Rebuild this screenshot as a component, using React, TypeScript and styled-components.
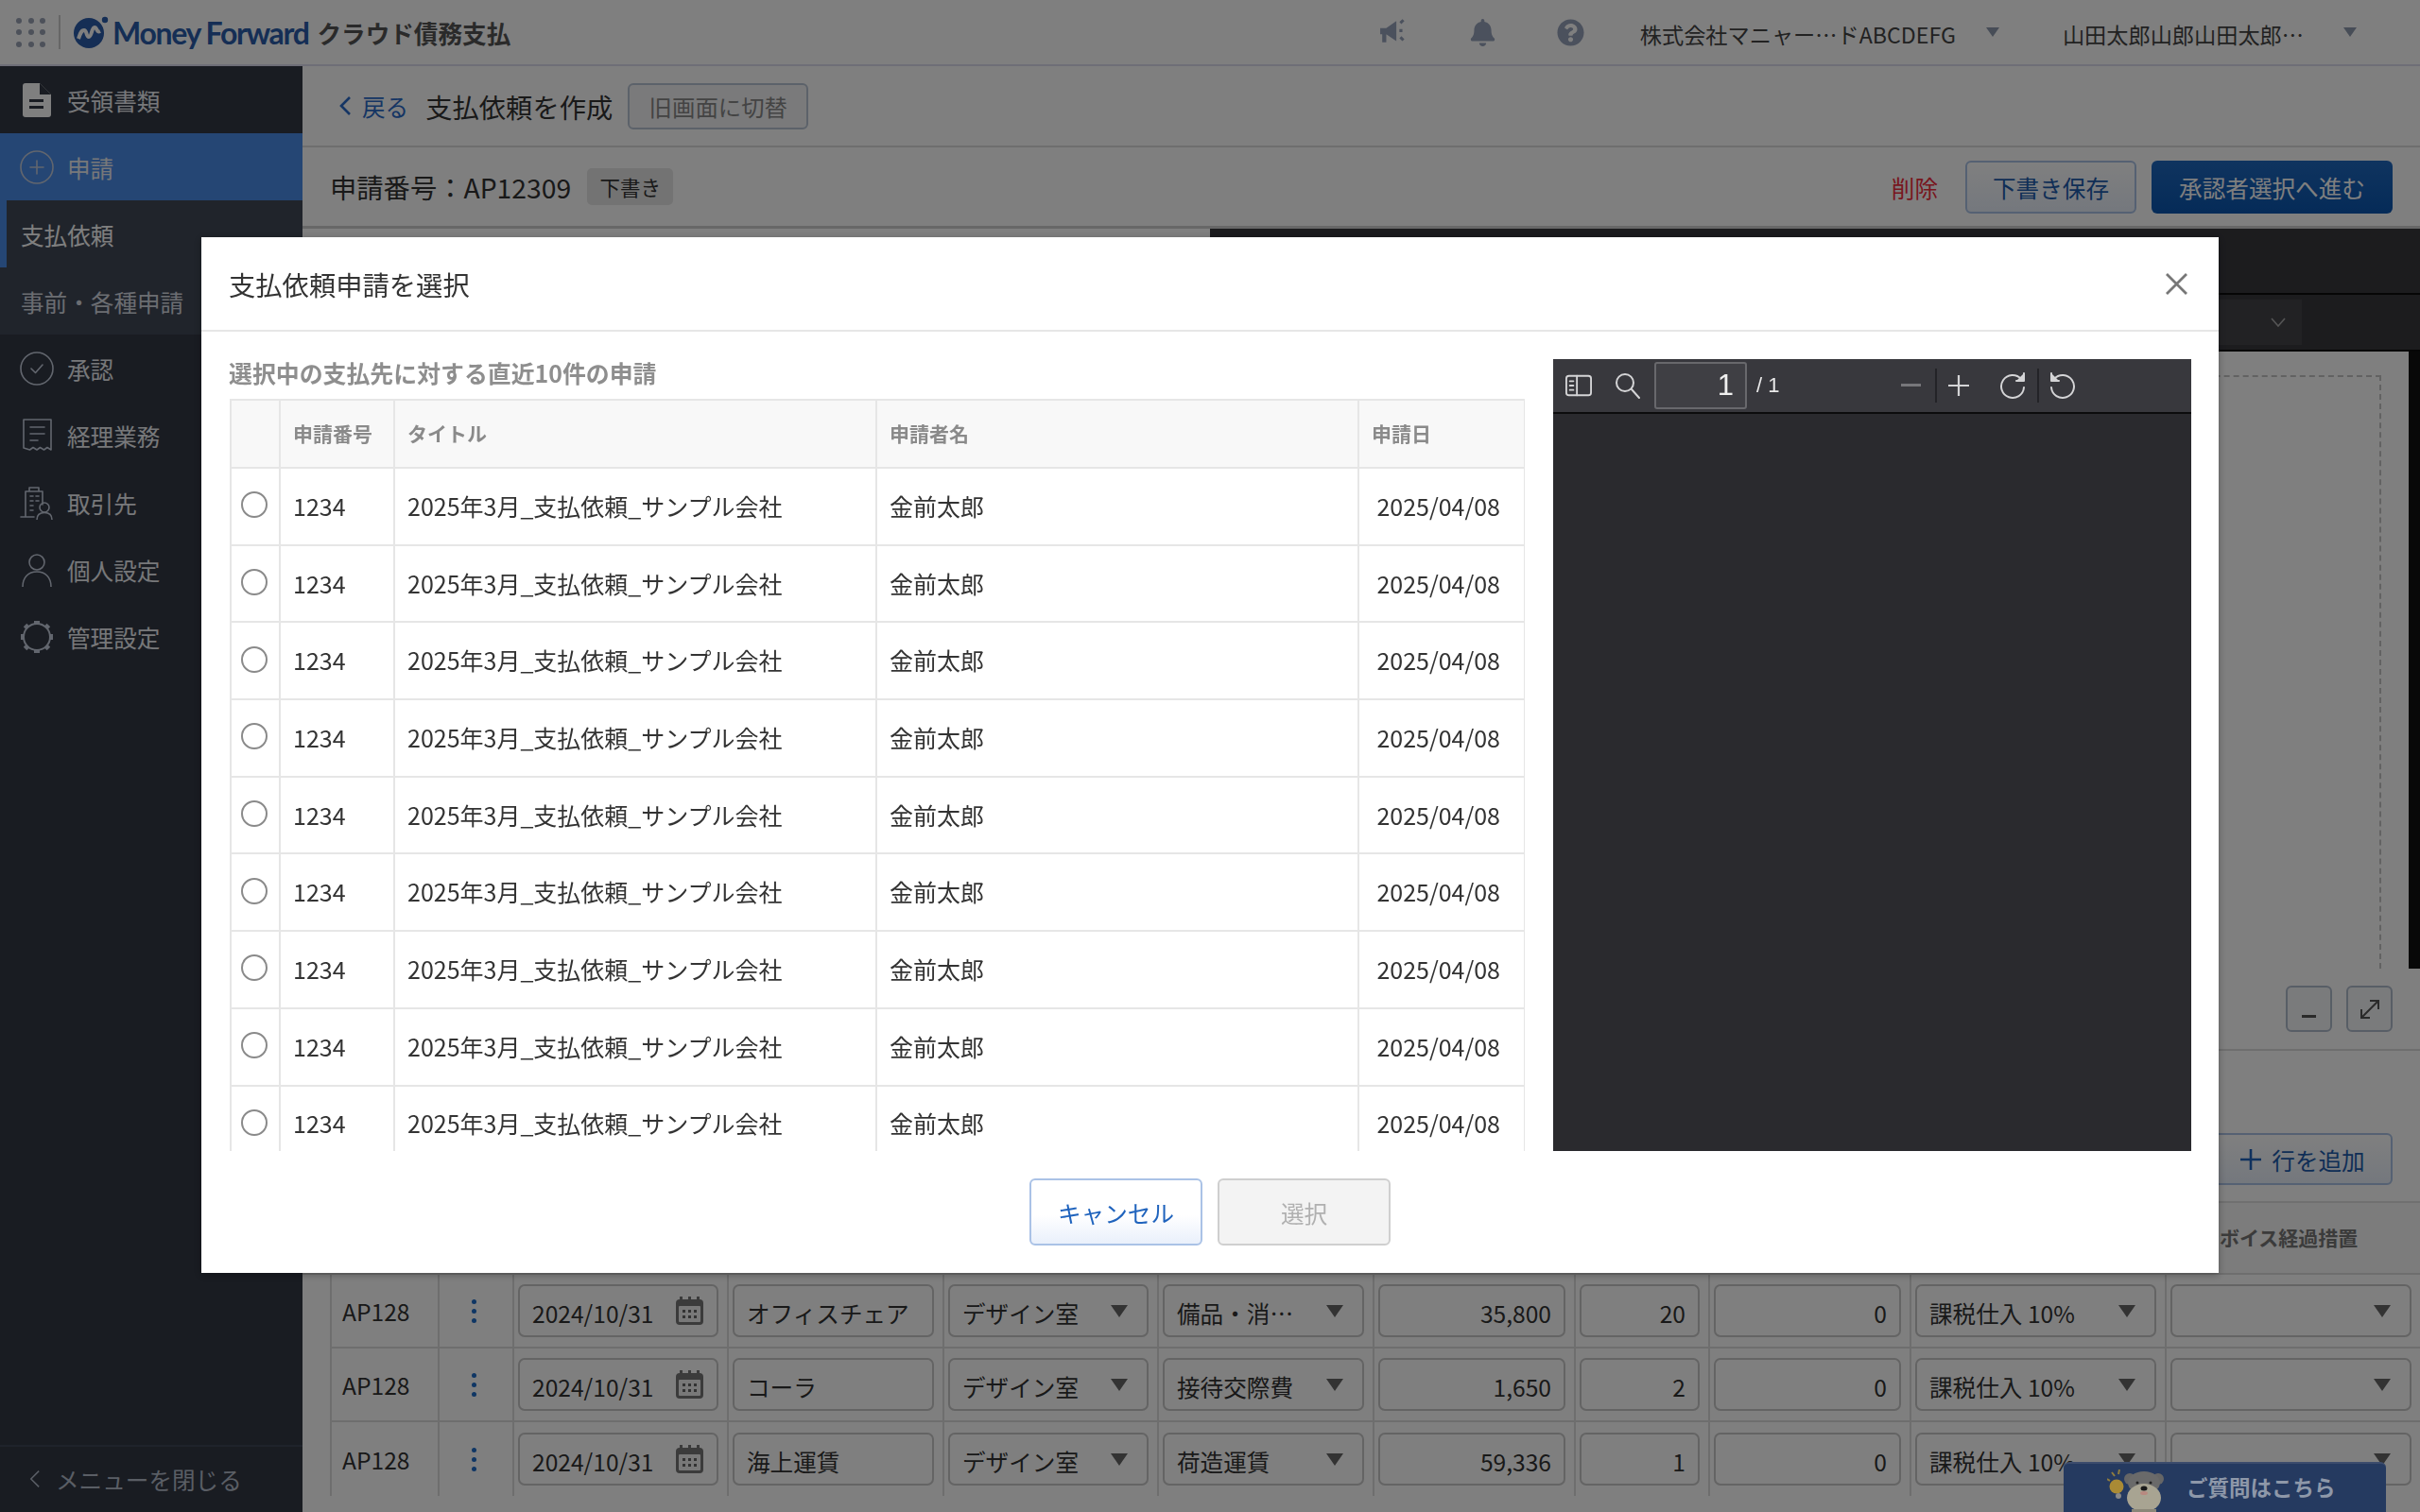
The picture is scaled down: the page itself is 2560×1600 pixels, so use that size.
import { FC, ReactNode } from 'react';
import styled, { createGlobalStyle } from 'styled-components';
import { FaBell, FaQuestionCircle } from 'react-icons/fa';

const GlobalStyle = createGlobalStyle`
  html, body {
    margin: 0;
    padding: 0;
    height: 100%;
    overflow: hidden;
  }
  body {
    font-family: "Noto Sans CJK JP", "Noto Sans", sans-serif;
    font-size: 24.6px;
    color: #333;
    background: #fff;
  }
  * {
    box-sizing: border-box;
  }
`;

const Page = styled.div`
  width: 2560px;
  height: 1600px;
  display: flex;
  flex-direction: column;
  overflow: hidden;
`;

/* top header */
const TopBar = styled.header`
  height: 70px;
  flex: none;
  display: flex;
  align-items: center;
  background: #fff;
  border-bottom: 2px solid #dde;
  padding: 0 67px 0 17px;
`;

const AppGrid = styled.div`
  display: grid;
  grid-template-columns: repeat(3, 6px);
  gap: 6.5px;
  padding-right: 14px;
  border-right: 2px solid #ccc;
  height: 36px;
  align-content: center;
  margin-right: 14px;
`;

const AppDot = styled.span`
  width: 6px;
  height: 6px;
  border-radius: 50%;
  background: #9aa3b5;
`;

const Brand = styled.div`
  display: flex;
  align-items: center;
`;

const BrandName = styled.span`
  font-family: "Lato", sans-serif;
  font-weight: 700;
  font-size: 32px;
  letter-spacing: -1.35px;
  color: #2a5caa;
  margin-left: 3px;
  white-space: nowrap;
`;

const ProductName = styled.span`
  font-size: 25.6px;
  font-weight: 700;
  color: #555;
  margin-left: 9px;
  white-space: nowrap;
`;

const TopRight = styled.div`
  margin-left: auto;
  display: flex;
  align-items: center;
`;

const TopIcon = styled.div`
  width: 93px;
  display: flex;
  justify-content: center;
  align-items: center;
  color: #96a2ba;
  font-size: 29px;
`;

const TopMenu = styled.div<{ $gap: number }>`
  display: flex;
  align-items: center;
  gap: ${p => p.$gap}px;
  margin-left: 27px;
  font-size: 23.2px;
  color: #444;
  white-space: nowrap;
  & + & {
    margin-left: 67px;
  }
`;

const TopMenuText = styled.span`
  padding-top: 4px;
`;

const TopCaret = styled.span`
  width: 0;
  height: 0;
  border-left: 7px solid transparent;
  border-right: 7px solid transparent;
  border-top: 10px solid #8f9aae;
`;

/* sidebar */
const Body = styled.div`
  flex: 1;
  display: flex;
  min-height: 0;
`;

const Sidebar = styled.nav`
  width: 320px;
  flex: none;
  background: #323844;
  display: flex;
  flex-direction: column;
`;

const NavItem = styled.div<{ $active?: boolean }>`
  height: 71px;
  flex: none;
  display: flex;
  align-items: center;
  gap: 14px;
  padding-left: 21px;
  color: #eef0f4;
  background: ${p => (p.$active ? '#4a8ce8' : 'transparent')};
`;

const NavIcon = styled.span`
  width: 36px;
  height: 40px;
  display: flex;
  align-items: center;
  justify-content: center;
  svg {
    display: block;
  }
`;

const SubItem = styled.div<{ $current?: boolean }>`
  height: 71px;
  flex: none;
  display: flex;
  align-items: center;
  padding-left: ${p => (p.$current ? 15 : 22)}px;
  background: #404856;
  color: ${p => (p.$current ? '#fff' : '#d7dbe3')};
  border-left: ${p => (p.$current ? '7px solid #4a8ce8' : 'none')};
`;

const CloseMenu = styled.div`
  margin-top: auto;
  height: 71px;
  display: flex;
  align-items: center;
  gap: 16px;
  padding: 0 0 2px 30px;
  border-top: 2px solid #3e4757;
  color: #b4bccb;
`;

/* main page behind the dialog */
const Main = styled.main`
  flex: 1;
  min-width: 0;
  display: flex;
  flex-direction: column;
  background: #fff;
`;

const TitleBar = styled.div`
  height: 86px;
  flex: none;
  display: flex;
  align-items: center;
  padding-left: 38px;
  border-bottom: 2px solid #ddd;
`;

const BackLink = styled.span`
  display: flex;
  align-items: center;
  gap: 11px;
  color: #2a6ac8;
  margin-right: 18px;
`;

const PageTitle = styled.span`
  font-size: 28.3px;
  color: #333;
`;

const OldViewButton = styled.span`
  margin-left: 16px;
  width: 191px;
  height: 49px;
  display: flex;
  align-items: center;
  justify-content: center;
  font-size: 24.4px;
  color: #888;
  border: 2px solid #b9c4d4;
  border-radius: 6px;
  background: #f4f5f7;
`;

const ActionBar = styled.div`
  height: 86px;
  flex: none;
  display: flex;
  align-items: center;
  padding: 0 29px 0 29px;
  border-bottom: 3px solid #cfcfcf;
`;

const ApplicationNo = styled.span`
  font-size: 28.3px;
  color: #333;
`;

const DraftTag = styled.span`
  margin-left: 17px;
  width: 91px;
  height: 39px;
  border-radius: 5px;
  background: #e6e6e6;
  display: flex;
  align-items: center;
  justify-content: center;
  font-size: 21.5px;
`;

const DeleteLink = styled.span`
  margin-left: auto;
  margin-right: 29px;
  color: #f02c3c;
`;

const SaveButton = styled.span`
  width: 181px;
  height: 56px;
  display: flex;
  align-items: center;
  justify-content: center;
  color: #1f5cad;
  border: 2px solid #aac2e6;
  border-radius: 6px;
  background: linear-gradient(#fff, #e9f0fb);
`;

const ProceedButton = styled.span`
  margin-left: 16px;
  width: 255px;
  height: 56px;
  display: flex;
  align-items: center;
  justify-content: center;
  color: #fff;
  border-radius: 6px;
  background: linear-gradient(#1f68bf, #0a56b0);
`;

const Split = styled.div`
  height: 870px;
  flex: none;
  display: flex;
  justify-content: flex-end;
  border-bottom: 2px solid #ddd;
`;

const Viewer = styled.div`
  width: 1280px;
  display: flex;
  flex-direction: column;
`;

const ViewerTop = styled.div`
  height: 70px;
  flex: none;
  background: #38383d;
  border-bottom: 2px solid #0c0c0d;
`;

const ViewerFind = styled.div`
  height: 60px;
  flex: none;
  background: #38383d;
  border-bottom: 2px solid #0c0c0d;
  display: flex;
  justify-content: flex-end;
  padding: 5px 125px 5px 0;
`;

const ViewerSelect = styled.div`
  width: 200px;
  background: #444449;
  display: flex;
  align-items: center;
  justify-content: flex-end;
  padding-right: 17px;
`;

const ViewerBody = styled.div`
  flex: 1;
  display: flex;
  min-height: 0;
  overflow: hidden;
  background: #fff;
`;

const DropZone = styled.div`
  flex: 1;
  margin: 25px 29px -10px 30px;
  border: 2px dashed #c4c4c4;
`;

const ScrollTrack = styled.div`
  width: 12px;
  background: #111;
`;

const ViewerControls = styled.div`
  height: 85px;
  flex: none;
  display: flex;
  justify-content: flex-end;
  align-items: center;
  gap: 15px;
  padding-right: 29px;
`;

const ToolSquare = styled.span`
  width: 49px;
  height: 49px;
  display: flex;
  align-items: center;
  justify-content: center;
  border: 2px solid #b0bccd;
  border-radius: 6px;
  background: #f5f6f8;
  color: #555;
`;

const MinusMark = styled.span`
  width: 15px;
  height: 3px;
  background: #555;
  margin-top: 16px;
`;

const AddRowArea = styled.div`
  height: 159px;
  flex: none;
  display: flex;
  justify-content: flex-end;
  padding: 87px 29px 0 0;
`;

const AddRowButton = styled.span`
  width: 190px;
  height: 55px;
  display: flex;
  align-items: center;
  justify-content: center;
  gap: 11px;
  color: #1f5cad;
  border: 2px solid #aac2e6;
  border-radius: 6px;
  background: linear-gradient(#fff, #e9f0fb);
`;

const LineTable = styled.div`
  margin-left: 29px;
  display: flex;
  flex-direction: column;
`;

const lineColumns = '114px 79px 227px 228px 227px 228px 213px 142px 213px 270px 270px';

const LineRow = styled.div<{ $last?: boolean }>`
  height: 78px;
  display: grid;
  grid-template-columns: ${lineColumns};
  border-bottom: ${p => (p.$last ? 'none' : '2px solid #dcdcdc')};
`;

const LineHead = styled.div`
  height: 78px;
  margin-left: -29px;
  padding-left: 29px;
  display: grid;
  grid-template-columns: ${lineColumns};
  background: #f8f8f8;
  border-top: 2px solid #e0e0e0;
  border-bottom: 2px solid #dcdcdc;
`;

const HeadCell = styled.div`
  display: flex;
  align-items: center;
  padding: 0 0 2px 16px;
  font-size: 21px;
  font-weight: 700;
  color: #777;
  white-space: nowrap;
`;

const LineCell = styled.div`
  display: flex;
  align-items: center;
  border-left: 2px solid #dcdcdc;
  padding: 0 9px 0 4px;
`;

const LineId = styled(LineCell)`
  padding-left: 11px;
`;

const Kebab = styled.span`
  margin: 0 auto;
  display: flex;
  flex-direction: column;
  gap: 5px;
  i {
    width: 5px;
    height: 5px;
    border-radius: 50%;
    background: #1f6cc8;
  }
`;

const Field = styled.div<{ $align?: 'between' | 'end' }>`
  flex: 1;
  min-width: 0;
  height: 56px;
  display: flex;
  align-items: center;
  justify-content: ${p => (p.$align === 'end' ? 'flex-end' : 'space-between')};
  padding: 0 20px 0 13px;
  border: 2px solid #c8c8c8;
  border-radius: 7px;
  background: #fff;
  white-space: nowrap;
`;

const NumberField = styled(Field)`
  padding-right: 13px;
`;

const DateField = styled(Field)`
  padding-right: 14px;
`;

const FieldText = styled.span`
  padding-top: 3px;
`;

const Caret = styled.span`
  width: 0;
  height: 0;
  flex: none;
  border-left: 9px solid transparent;
  border-right: 9px solid transparent;
  border-top: 13px solid #666;
`;

/* dialog */
const Overlay = styled.div`
  position: fixed;
  inset: 0;
  padding-bottom: 2px;
  background: rgba(0, 0, 0, 0.5);
  display: flex;
  align-items: center;
  justify-content: center;
`;

const Dialog = styled.section`
  width: 2134px;
  height: 1096px;
  background: #fff;
  display: flex;
  flex-direction: column;
  box-shadow: 0 2px 8px rgba(0, 0, 0, 0.3);
`;

const DialogHead = styled.div`
  height: 100px;
  flex: none;
  display: flex;
  align-items: center;
  justify-content: space-between;
  padding: 0 33px 0 29px;
  border-bottom: 2px solid #e6e6e6;
`;

const DialogTitle = styled.h2`
  margin: 0;
  font-size: 28.3px;
  font-weight: 400;
  color: #333;
`;

const DialogBody = styled.div`
  flex: 1;
  min-height: 0;
  display: flex;
  gap: 30px;
  padding: 29px 29px 0;
`;

const ListPane = styled.div`
  width: 1371px;
  display: flex;
  flex-direction: column;
`;

const ListLabel = styled.div`
  height: 42px;
  flex: none;
  line-height: 28px;
  font-size: 24.9px;
  font-weight: 700;
  color: #8e8e8e;
`;

const ListScroll = styled.div`
  flex: 1;
  min-height: 0;
  overflow: hidden;
`;

const ListTable = styled.table`
  width: 1369px;
  margin: 0 1px;
  border-collapse: collapse;
  table-layout: fixed;
`;

const Th = styled.th`
  height: 72px;
  padding: 0 13px 3px;
  text-align: left;
  font-size: 21px;
  font-weight: 700;
  color: #8a8a8a;
  background: #f8f8f8;
  border: 2px solid #e6e6e6;
  white-space: nowrap;
`;

const Td = styled.td<{ $right?: boolean }>`
  height: 81.7px;
  padding: 0 ${p => (p.$right ? 25 : 13)}px 2px 13px;
  text-align: ${p => (p.$right ? 'right' : 'left')};
  font-size: 25px;
  color: #333;
  border: 2px solid #e6e6e6;
  white-space: nowrap;
`;

const RadioMark = styled.span`
  display: block;
  width: 28px;
  height: 28px;
  margin: -1px 0 0 -3px;
  border-radius: 50%;
  border: 2.5px solid #8a8a8a;
  background: #fff;
`;

const PdfPane = styled.div`
  width: 675px;
  display: flex;
  flex-direction: column;
  background: #2a2a2e;
`;

const PdfBar = styled.div`
  height: 58px;
  flex: none;
  display: flex;
  align-items: center;
  background: #38383d;
  border-bottom: 2px solid #0c0c0d;
  color: #c8c8ca;
  padding-left: 13px;
`;

const PdfTool = styled.span<{ $w: number; $dim?: boolean; $ml?: number }>`
  width: ${p => p.$w}px;
  margin-left: ${p => p.$ml ?? 0}px;
  display: flex;
  align-items: center;
  justify-content: center;
  flex: none;
  color: ${p => (p.$dim ? '#77777b' : '#d4d4d6')};
`;

const PageInput = styled.span`
  width: 98px;
  height: 50px;
  flex: none;
  margin-left: 1px;
  display: flex;
  align-items: center;
  justify-content: flex-end;
  padding-right: 12px;
  background: #3f3f44;
  border: 2px solid #68686c;
  border-radius: 3px;
  font-family: "Liberation Sans", sans-serif;
  font-size: 31px;
  color: #f0f0f0;
`;

const PageTotal = styled.span`
  margin-left: 10px;
  width: 153px;
  flex: none;
  font-family: "Liberation Sans", sans-serif;
  font-size: 22px;
  color: #e8e8e8;
`;

const PdfSep = styled.span<{ $ml: number }>`
  width: 2px;
  height: 36px;
  flex: none;
  margin-left: ${p => p.$ml}px;
  background: #232327;
`;

const DialogFoot = styled.div`
  height: 129px;
  flex: none;
  display: flex;
  justify-content: center;
  gap: 16px;
  padding-top: 29px;
`;

const FootButton = styled.button<{ $muted?: boolean }>`
  width: 183px;
  height: 71px;
  padding: 0;
  font: inherit;
  border-radius: 6px;
  color: ${p => (p.$muted ? '#b0b0b0' : '#1f63bd')};
  border: 2px solid ${p => (p.$muted ? '#cfcfcf' : '#aac2e6')};
  background: ${p => (p.$muted ? '#f3f3f3' : 'linear-gradient(#fff 55%, #e9f0fb)')};
`;

/* help tab */
const HelpTab = styled.div`
  position: fixed;
  left: 2183px;
  bottom: 0;
  width: 341px;
  height: 53px;
  display: flex;
  align-items: flex-start;
  padding: 6px 0 0 46px;
  gap: 14px;
  background: #253a60;
  border-top: 2px solid #3c4c6c;
  border-radius: 6px 6px 0 0;
  overflow: hidden;
  color: #8e98a9;
  font-size: 22.5px;
  font-weight: 700;
  line-height: 36px;
`;

const NavGlyph: FC<{ children: ReactNode; size?: number }> = ({ children, size = 36 }) => (
  <NavIcon>
    <svg width={size} height={size} viewBox="0 0 36 36" fill="none" stroke="#c4ccdc" strokeWidth="1.6" strokeLinecap="round" strokeLinejoin="round">
      {children}
    </svg>
  </NavIcon>
);

const PdfIcon: FC<{ children: ReactNode; w?: number }> = ({ children, w = 30 }) => (
  <svg width={w} height="30" viewBox="0 0 30 30" fill="none" stroke="currentColor" strokeWidth="2" strokeLinecap="round" strokeLinejoin="round">
    {children}
  </svg>
);

const CalendarIcon = () => (
  <svg width="29" height="30" viewBox="0 0 29 30">
    <rect x="0" y="3" width="29" height="27" rx="4" fill="#777" />
    <rect x="4" y="0" width="3" height="6" fill="#777" />
    <rect x="13" y="0" width="3" height="6" fill="#777" />
    <rect x="22" y="0" width="3" height="6" fill="#777" />
    <rect x="3" y="10" width="23" height="17" rx="1" fill="#f0f0f0" />
    {[7, 13, 19].map(x => [14, 20].map(y => <rect key={`${x}-${y}`} x={x} y={y} width="3" height="3" fill="#666" />))}
  </svg>
);

const Chevron: FC<{ color: string; w?: number; h?: number; width?: number }> = ({ color, w = 14, h = 22, width = 2.6 }) => (
  <svg width={w} height={h} viewBox="0 0 14 22" fill="none" stroke={color} strokeWidth={width}>
    <path d="M12 2 3 11l9 9" />
  </svg>
);

const Dog = () => (
  <svg width="70" height="53" viewBox="0 0 70 53">
    <path d="M8 7l-3-4M12 5l1-5M3 12l-3-2" stroke="#8f7c3e" strokeWidth="2" />
    <circle cx="10" cy="18" r="7.5" fill="#a98a35" />
    <circle cx="12" cy="28" r="3" fill="#888" />
    <ellipse cx="24" cy="10" rx="6" ry="6" fill="#666" />
    <ellipse cx="54" cy="10" rx="6" ry="6" fill="#666" />
    <ellipse cx="39" cy="14" rx="17" ry="12" fill="#6a6a6a" />
    <ellipse cx="39" cy="30" rx="18" ry="15" fill="#a8a492" />
    <rect x="26" y="42" width="26" height="11" fill="#8a8678" />
    <circle cx="32" cy="14" r="1.5" fill="#222" />
    <circle cx="46" cy="14" r="1.5" fill="#222" />
    <ellipse cx="39" cy="20" rx="3.5" ry="2.5" fill="#1a1a1a" />
    <ellipse cx="39" cy="25" rx="4" ry="2" fill="#b88a80" />
  </svg>
);

const requests = Array.from({ length: 9 }, (_, i) => i);

const lines = [
  { item: 'オフィスチェア', cat: '備品・消…', amount: '35,800', qty: '20' },
  { item: 'コーラ', cat: '接待交際費', amount: '1,650', qty: '2' },
  { item: '海上運賃', cat: '荷造運賃', amount: '59,336', qty: '1' },
];

const heads = ['申請番号', '', '日付', '内容', '部門', '勘定科目', '単価', '数量', '税額', '税区分', 'インボイス経過措置'];

export default function App() {
  return (
    <>
      <GlobalStyle />
      <Page>
        <TopBar>
          <AppGrid>
            {Array.from({ length: 9 }, (_, i) => <AppDot key={i} />)}
          </AppGrid>
          <Brand>
            <svg width="38" height="34" viewBox="0 0 38 34">
              <circle cx="16" cy="18" r="16" fill="#2a5caa" />
              <circle cx="33" cy="4" r="3.200" fill="#2a5caa" />
              <path d="M5 24c2-6 3-9 6-9 3 0 2 7 5 7 3 0 3-10 6-10 3 0 2 6 6 4" fill="none" stroke="#fff" strokeWidth="4" strokeLinejoin="round" />
            </svg>
            <BrandName>Money Forward</BrandName>
            <ProductName>クラウド債務支払</ProductName>
          </Brand>
          <TopRight>
            <TopIcon>
              <svg width="32" height="30" viewBox="0 0 30 28" fill="#96a2ba">
                <path d="M1 10h6l10-7v20L7 16v8H3v-8H1z" />
                <path d="M20 11h3v3h-3zM20 4l3-3 2 2-3 3zM20 20l2-2 3 3-2 2z" />
              </svg>
            </TopIcon>
            <TopIcon><FaBell /></TopIcon>
            <TopIcon><FaQuestionCircle /></TopIcon>
            <TopMenu $gap={32}><TopMenuText>株式会社マニャー…ドABCDEFG</TopMenuText><TopCaret /></TopMenu>
            <TopMenu $gap={42}><TopMenuText>山田太郎山郎山田太郎…</TopMenuText><TopCaret /></TopMenu>
          </TopRight>
        </TopBar>
        <Body>
          <Sidebar>
            <NavItem>
              <NavIcon>
                <svg width="30" height="36" viewBox="0 0 30 36">
                  <path d="M3 0h15l12 12v21a3 3 0 0 1-3 3H3a3 3 0 0 1-3-3V3a3 3 0 0 1 3-3z" fill="#fff" />
                  <path d="M18 0v12h12z" fill="#323844" />
                  <rect x="7" y="17" width="15" height="3" fill="#323844" />
                  <rect x="7" y="24" width="15" height="3" fill="#323844" />
                </svg>
              </NavIcon>
              受領書類
            </NavItem>
            <NavItem $active>
              <NavGlyph>
                <circle cx="18" cy="18" r="17" />
                <path d="M18 11v14M11 18h14" />
              </NavGlyph>
              申請
            </NavItem>
            <SubItem $current>支払依頼</SubItem>
            <SubItem>事前・各種申請</SubItem>
            <NavItem>
              <NavGlyph>
                <circle cx="18" cy="18" r="17" />
                <path d="M12 18l4.500 4.500L24 14" />
              </NavGlyph>
              承認
            </NavItem>
            <NavItem>
              <NavGlyph>
                <path d="M4 1h29v32l-4-2.500-3.500 2.500-4-2.500-3.500 2.500-4-2.500-3.500 2.500L4 31z" />
                <path d="M11 9h15M11 16h15M11 23h8" />
              </NavGlyph>
              経理業務
            </NavItem>
            <NavItem>
              <NavGlyph>
                <path d="M6 32V6h18v14M10 6V2h10v4M1 33h14M11 11h3M17 11h3M11 16h3M17 16h3M11 21h3M11 26h3" />
                <circle cx="26" cy="23" r="5" />
                <path d="M18 36c0-5 3-7.500 8-7.500s8 2.500 8 7.500" />
              </NavGlyph>
              取引先
            </NavItem>
            <NavItem>
              <NavGlyph>
                <circle cx="18" cy="10" r="8" />
                <path d="M3 36c0-10 6-16 15-16s15 6 15 16" />
              </NavGlyph>
              個人設定
            </NavItem>
            <NavItem>
              <NavGlyph>
                <circle cx="18" cy="18" r="14" strokeWidth="2" />
                <g fill="#c4ccdc" stroke="none">
                  <rect x="15" y="1" width="6" height="4" />
                  <rect x="15" y="31" width="6" height="4" />
                  <rect x="1" y="15" width="4" height="6" />
                  <rect x="31" y="15" width="4" height="6" />
                  <rect x="4.500" y="5" width="5" height="4" transform="rotate(-45 7 7)" />
                  <rect x="26.500" y="5" width="5" height="4" transform="rotate(45 29 7)" />
                  <rect x="4.500" y="27" width="5" height="4" transform="rotate(45 7 29)" />
                  <rect x="26.500" y="27" width="5" height="4" transform="rotate(-45 29 29)" />
                </g>
              </NavGlyph>
              管理設定
            </NavItem>
            <CloseMenu>
              <Chevron color="#b4bccb" w={13} h={22} width={1.6} />
              メニューを閉じる
            </CloseMenu>
          </Sidebar>
          <Main>
            <TitleBar>
              <BackLink>
                <Chevron color="#2a6ac8" />
                戻る
              </BackLink>
              <PageTitle>支払依頼を作成</PageTitle>
              <OldViewButton>旧画面に切替</OldViewButton>
            </TitleBar>
            <ActionBar>
              <ApplicationNo>申請番号：AP12309</ApplicationNo>
              <DraftTag>下書き</DraftTag>
              <DeleteLink>削除</DeleteLink>
              <SaveButton>下書き保存</SaveButton>
              <ProceedButton>承認者選択へ進む</ProceedButton>
            </ActionBar>
            <Split>
              <Viewer>
                <ViewerTop />
                <ViewerFind>
                  <ViewerSelect>
                    <svg width="16" height="10" viewBox="0 0 16 10" fill="none" stroke="#aaa" strokeWidth="1.600">
                      <path d="M1 1l7 8 7-8" />
                    </svg>
                  </ViewerSelect>
                </ViewerFind>
                <ViewerBody>
                  <DropZone />
                  <ScrollTrack />
                </ViewerBody>
                <ViewerControls>
                  <ToolSquare><MinusMark /></ToolSquare>
                  <ToolSquare>
                    <svg width="26" height="26" viewBox="0 0 26 26" fill="none" stroke="#555" strokeWidth="2">
                      <path d="M5 21 21 5M13 4h9v9M4 13v9h9" />
                    </svg>
                  </ToolSquare>
                </ViewerControls>
              </Viewer>
            </Split>
            <AddRowArea>
              <AddRowButton>
                <svg width="22" height="22" viewBox="0 0 22 22" stroke="#1f63bd" strokeWidth="2.600">
                  <path d="M11 0v22M0 11h22" />
                </svg>
                行を追加
              </AddRowButton>
            </AddRowArea>
            <LineTable>
              <LineHead>
                {heads.map((h, i) => <HeadCell key={i}>{h}</HeadCell>)}
              </LineHead>
              {lines.map((l, i) => (
                <LineRow key={i} $last={i === lines.length - 1}>
                  <LineId>AP128</LineId>
                  <LineCell>
                    <Kebab><i /><i /><i /></Kebab>
                  </LineCell>
                  <LineCell><DateField><FieldText>2024/10/31</FieldText><CalendarIcon /></DateField></LineCell>
                  <LineCell><Field><FieldText>{l.item}</FieldText></Field></LineCell>
                  <LineCell><Field><FieldText>デザイン室</FieldText><Caret /></Field></LineCell>
                  <LineCell><Field><FieldText>{l.cat}</FieldText><Caret /></Field></LineCell>
                  <LineCell><NumberField $align="end"><FieldText>{l.amount}</FieldText></NumberField></LineCell>
                  <LineCell><NumberField $align="end"><FieldText>{l.qty}</FieldText></NumberField></LineCell>
                  <LineCell><NumberField $align="end"><FieldText>0</FieldText></NumberField></LineCell>
                  <LineCell><Field><FieldText>課税仕入 10%</FieldText><Caret /></Field></LineCell>
                  <LineCell><Field $align="end"><Caret /></Field></LineCell>
                </LineRow>
              ))}
            </LineTable>
          </Main>
        </Body>
      </Page>
      <Overlay>
        <Dialog>
          <DialogHead>
            <DialogTitle>支払依頼申請を選択</DialogTitle>
            <svg width="23" height="23" viewBox="0 0 23 23" stroke="#777" strokeWidth="2.800">
              <path d="M1 1l21 21M22 1 1 22" />
            </svg>
          </DialogHead>
          <DialogBody>
            <ListPane>
              <ListLabel>選択中の支払先に対する直近10件の申請</ListLabel>
              <ListScroll>
                <ListTable>
                  <colgroup>
                    <col width="52" />
                    <col width="121" />
                    <col width="510" />
                    <col width="510" />
                    <col width="176" />
                  </colgroup>
                  <thead>
                    <tr>
                      <Th />
                      <Th>申請番号</Th>
                      <Th>タイトル</Th>
                      <Th>申請者名</Th>
                      <Th>申請日</Th>
                    </tr>
                  </thead>
                  <tbody>
                    {requests.map(i => (
                      <tr key={i}>
                        <Td><RadioMark /></Td>
                        <Td>1234</Td>
                        <Td>2025年3月_支払依頼_サンプル会社</Td>
                        <Td>金前太郎</Td>
                        <Td $right>2025/04/08</Td>
                      </tr>
                    ))}
                  </tbody>
                </ListTable>
              </ListScroll>
            </ListPane>
            <PdfPane>
              <PdfBar>
                <PdfTool $w={28}>
                  <PdfIcon>
                    <rect x="1" y="4" width="28" height="22" rx="3" />
                    <path d="M13 4v22M5 10h4M5 15h4M5 20h4" />
                  </PdfIcon>
                </PdfTool>
                <PdfTool $w={54} $ml={11}>
                  <PdfIcon>
                    <circle cx="12" cy="12" r="9" />
                    <path d="M19 19l8 9" />
                  </PdfIcon>
                </PdfTool>
                <PageInput>1</PageInput>
                <PageTotal>/ 1</PageTotal>
                <PdfTool $w={21} $dim>
                  <svg width="21" height="4" viewBox="0 0 21 4"><rect width="21" height="3" fill="currentColor" /></svg>
                </PdfTool>
                <PdfSep $ml={15} />
                <PdfTool $w={22} $ml={12}>
                  <svg width="22" height="22" viewBox="0 0 22 22" stroke="currentColor" strokeWidth="2.200"><path d="M11 0v22M0 11h22" /></svg>
                </PdfTool>
                <PdfTool $w={30} $ml={31}>
                  <PdfIcon>
                    <path d="M24 8a12 12 0 1 0 3 9" />
                    <path d="M27 2v8h-8" fill="currentColor" />
                  </PdfIcon>
                </PdfTool>
                <PdfSep $ml={11} />
                <PdfTool $w={30} $ml={10}>
                  <PdfIcon>
                    <path d="M6 8a12 12 0 1 1-3 9" />
                    <path d="M3 2v8h8" fill="currentColor" />
                  </PdfIcon>
                </PdfTool>
              </PdfBar>
            </PdfPane>
          </DialogBody>
          <DialogFoot>
            <FootButton>キャンセル</FootButton>
            <FootButton $muted disabled>選択</FootButton>
          </DialogFoot>
        </Dialog>
      </Overlay>
      <HelpTab>
        <Dog />
        ご質問はこちら
      </HelpTab>
    </>
  );
}
